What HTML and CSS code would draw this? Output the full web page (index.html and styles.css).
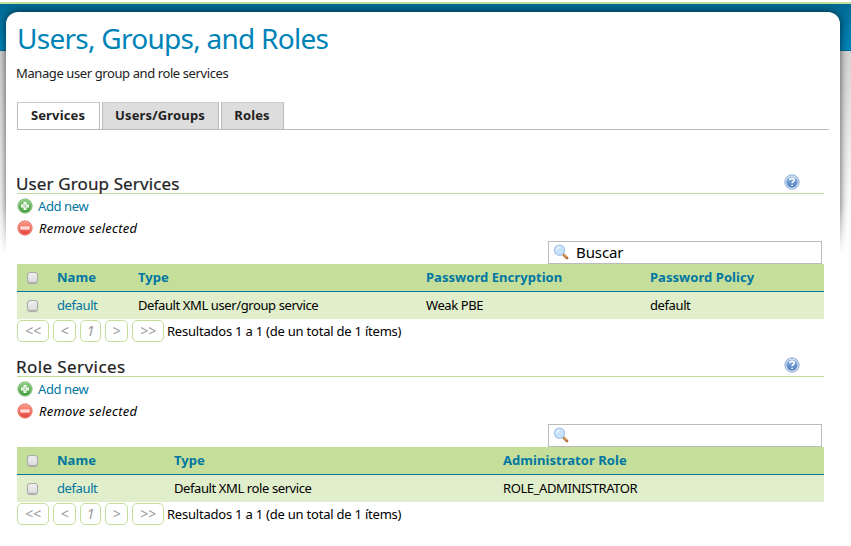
FILE: index.html
```
<!DOCTYPE html>
<html lang="es">
<head>
<meta charset="utf-8">
<title>Users, Groups, and Roles</title>
<link rel="stylesheet" href="styles.css">
</head>
<body>
<svg class="defs" width="0" height="0" aria-hidden="true">
<defs>
<linearGradient id="green" x1="0" y1="0" x2="0" y2="1"><stop offset="0" stop-color="#8fcf83"/><stop offset="1" stop-color="#3d9a37"/></linearGradient>
<linearGradient id="red" x1="0" y1="0" x2="0" y2="1"><stop offset="0" stop-color="#ff9a86"/><stop offset="1" stop-color="#e4433a"/></linearGradient>
<linearGradient id="blue" x1="0" y1="0" x2="0" y2="1"><stop offset="0" stop-color="#91b5e2"/><stop offset="1" stop-color="#4c7cbc"/></linearGradient>
</defs>
<symbol id="add" viewBox="0 0 16 16"><circle cx="8" cy="8" r="7.1" fill="#d5ebce" stroke="#67ae60" stroke-width=".9"/><circle cx="8" cy="8" r="6.5" fill="url(#green)"/><path d="M6.5 4h3v2.5H12v3H9.5V12h-3V9.5H4v-3h2.5z" fill="#fff"/><path d="M8 5.5v5M5.5 8h5" stroke="#9bce93" stroke-width=".9"/></symbol>
<symbol id="remove" viewBox="0 0 16 16"><circle cx="8" cy="8" r="7.1" fill="#ffc5ba" stroke="#d9574b" stroke-width=".9"/><circle cx="8" cy="8" r="6.5" fill="url(#red)"/><rect x="3.5" y="6.5" width="9" height="3" rx=".6" fill="#fff"/><path d="M4.5 8h7" stroke="#f6aca4"/></symbol>
<symbol id="help" viewBox="0 0 16 16"><circle cx="8" cy="8" r="7.1" fill="#dce8f7" stroke="#7b9ecb" stroke-width=".9"/><circle cx="8" cy="8" r="5.6" fill="url(#blue)"/><path d="M5.8 6.2C5.9 3.8 10.1 3.7 10.2 6c0 1.6-2.1 1.5-2.1 3.2M8.1 10.7v1.4" fill="none" stroke="#fff" stroke-width="1.6"/></symbol>
<symbol id="search" viewBox="0 0 16 16"><path d="M10.5 10.5l3.5 3.5" stroke="#b36f36" stroke-width="2.8" stroke-linecap="round"/><path d="M10.8 10.2l3 3" stroke="#e8b56f" stroke-width="1.2"/><circle cx="6.5" cy="6.2" r="5.1" fill="#c9e3fb" stroke="#a9c4ec" stroke-width="1.3"/><path d="M3.7 6.2a3 3 0 0 1 3-3" fill="none" stroke="#eaf6ff" stroke-width="1.4"/></symbol>
</svg>
<div class="band"></div>
<main class="page">
<h1>Users, Groups, and Roles</h1>
<p class="intro">Manage user group and role services</p>
<nav class="tabs"><a class="tab active">Services</a><a class="tab groups">Users/Groups</a><a class="tab roles">Roles</a></nav>
<section class="service">
<header><h2>User Group Services</h2><svg class="help"><use href="#help"/></svg></header>
<div class="action"><svg><use href="#add"/></svg><a>Add new</a></div>
<div class="action"><svg><use href="#remove"/></svg><em>Remove selected</em></div>
<div class="search"><svg><use href="#search"/></svg><span>Buscar</span></div>
<div class="row head users"><i class="check"></i><b>Name</b><b>Type</b><b>Password Encryption</b><b>Password Policy</b></div>
<div class="row users"><i class="check"></i><a>default</a><span>Default XML user/group service</span><span>Weak PBE</span><span>default</span></div>
<div class="pager"><em class="wide">&lt;&lt;</em><em>&lt;</em><em class="current">1</em><em>&gt;</em><em class="wide">&gt;&gt;</em><span>Resultados 1 a 1 (de un total de 1 ítems)</span></div>
</section>
<section class="service">
<header><h2 class="spaced">Role Services</h2><svg class="help"><use href="#help"/></svg></header>
<div class="action"><svg><use href="#add"/></svg><a>Add new</a></div>
<div class="action"><svg><use href="#remove"/></svg><em>Remove selected</em></div>
<div class="search"><svg><use href="#search"/></svg></div>
<div class="row head role"><i class="check"></i><b>Name</b><b>Type</b><b>Administrator Role</b></div>
<div class="row role"><i class="check"></i><a>default</a><span>Default XML role service</span><span>ROLE_ADMINISTRATOR</span></div>
<div class="pager"><em class="wide">&lt;&lt;</em><em>&lt;</em><em class="current">1</em><em>&gt;</em><em class="wide">&gt;&gt;</em><span>Resultados 1 a 1 (de un total de 1 ítems)</span></div>
</section>
</main>
</body>
</html>
```
FILE: styles.css
```
*{box-sizing:border-box}
body{margin:0;height:546px;overflow:hidden;position:relative;background:#fff;font:13px/20px "Noto Sans","Open Sans",sans-serif;letter-spacing:-.4px;color:#000}
.defs{position:absolute}
.band{position:absolute;z-index:-2;inset:0 0 auto;height:256px;overflow:hidden;background:linear-gradient(#fff 2px,#c5df9b 2px,#c5df9b 4px,transparent 4px),linear-gradient(#006b94 4px,#0088bd 50px,#006f99 50px,#006f99 51px,transparent 51px),linear-gradient(#d4d4d4 51px,#fff 215px);-webkit-mask-image:linear-gradient(#000 205px,transparent 254px);mask-image:linear-gradient(#000 205px,transparent 254px)}
.band::after{content:"";position:absolute;inset:12px 11px -30px 6px;border-radius:12px 12px 0 0;background:#fff;box-shadow:0 0 8px rgba(0,0,0,.7)}
.page{margin:0 11px 0 6px;height:546px;padding:24px 11px 0}
h1,h2,p{margin:0;font-weight:400}
h1{height:39px;color:#0083b7;font-size:28px;line-height:29px;letter-spacing:-.73px}
.intro{height:39px;margin-left:-1px;color:#222;white-space:nowrap}
.tabs{display:flex;gap:2px;width:812px;height:28px;border-bottom:1px solid #bbb;letter-spacing:.15px}
.tab{width:83px;height:28px;border:1px solid #bbb;border-top-color:#ccc;background:#ddd;color:#222;text-align:center;font-weight:700;line-height:25px;padding-right:1px}
.active{height:27px;border-bottom:0;background:#fff}
.groups{width:117px}
.roles{width:63px}
.service{width:807px;height:183px}
.tabs+.service{margin-top:42px}
.service header{display:flex;justify-content:space-between;height:22px;border-bottom:1px solid #c5df9b}
h2{margin-left:-1px;font-size:17px;line-height:24px;color:#222;letter-spacing:.12px;-webkit-text-stroke:.2px #222}
.spaced{letter-spacing:.42px}
.help{width:16px;height:16px;margin:2px 24px 0 0}
.action{display:flex;height:22px;align-items:center;gap:5px}
.action svg{width:16px;height:16px;flex:none}
.action em{letter-spacing:.26px;margin-left:1px}
a,.head{color:#0076a1}
.service header+.action{margin-top:1px}
.search{display:flex;width:274px;height:23px;margin:2px 0 0 531px;border:1px solid #bbb;padding-left:4px;background:#fff;font-size:15px;line-height:21px;gap:7px;letter-spacing:-.1px}
.search svg{width:16px;height:16px;margin-top:2px}
.row{display:grid;height:27px;align-items:center;padding-bottom:1px;background:#e1eecb;white-space:nowrap}
.row.head{height:28px;background:#c5df9b;border-bottom:1px solid #0076a1;letter-spacing:.05px}
.users{grid-template-columns:40px 81px 288px 224px 1fr}
.role{grid-template-columns:40px 117px 329px 1fr}
.check{width:11px;height:11px;margin-left:10px;border:1px solid #aaa;border-radius:3px;background:linear-gradient(#eee,#ddd);box-shadow:0 1px 1px #aaa}
.pager{display:flex;gap:4px;height:22px;margin-top:1px;white-space:nowrap;letter-spacing:-.22px}
.pager em{width:23px;height:22px;border:1px solid #c5df9b;border-radius:5px;color:#999;text-align:center;line-height:20px;font-size:14px;letter-spacing:0}
.pager .wide{width:32px}
.pager .current{width:21px}
.pager span{line-height:22px;margin-left:-1px}
```
